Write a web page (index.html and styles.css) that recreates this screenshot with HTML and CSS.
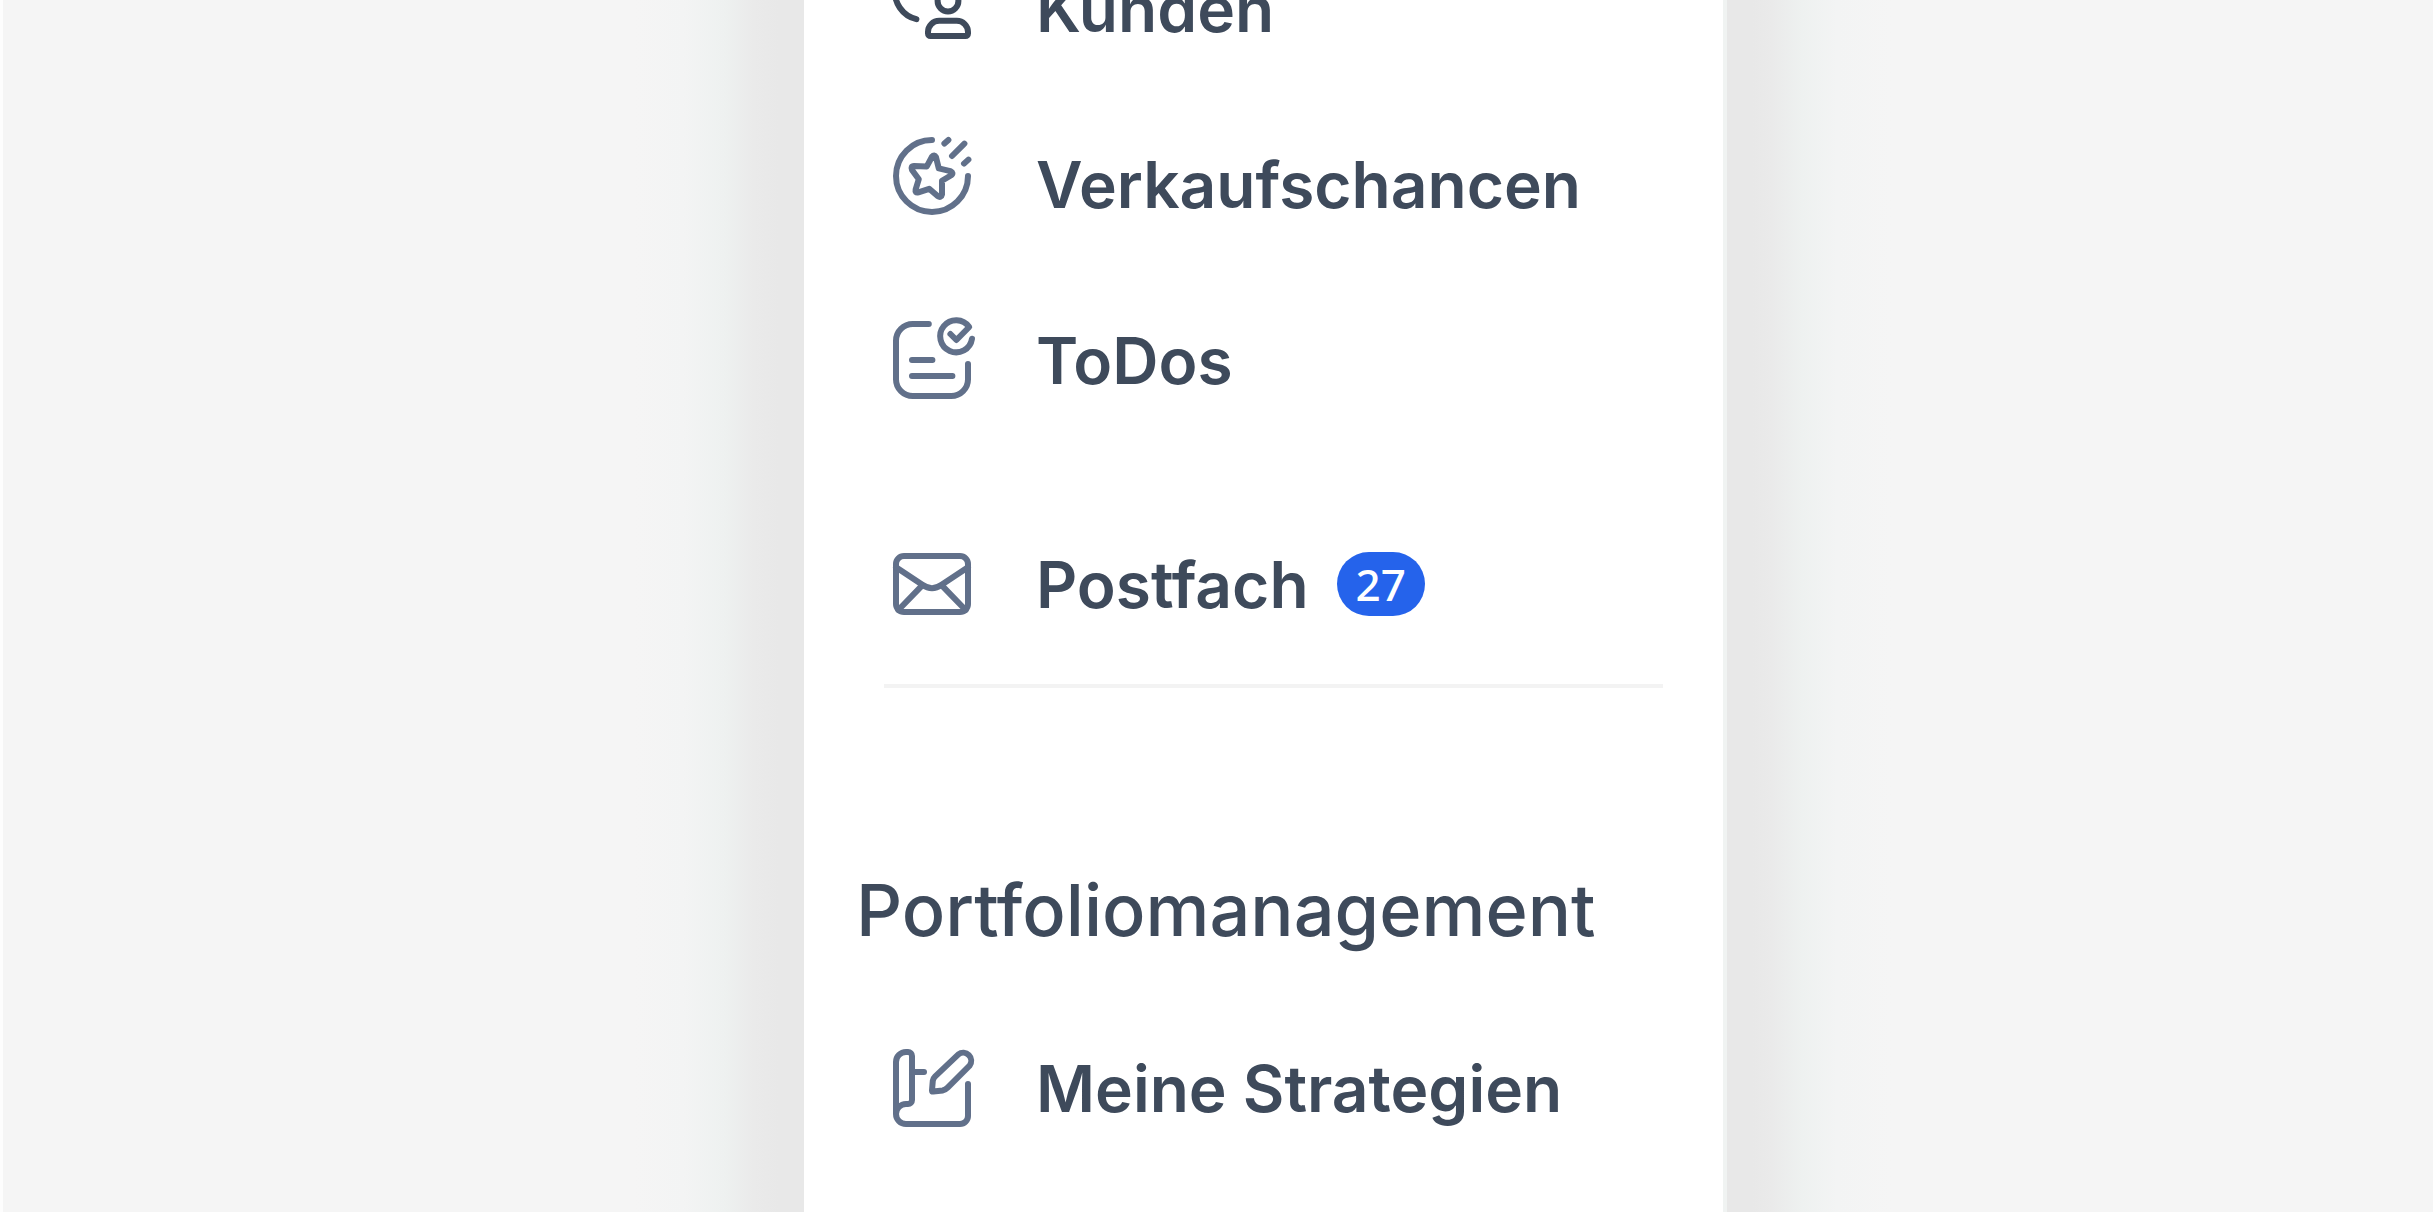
FILE: index.html
```html
<!DOCTYPE html>
<html lang="de">

<head>
    <meta charset="UTF-8">
    <meta name="viewport" content="width=device-width, initial-scale=1.0">
    <title>Navigation</title>

    <link rel="stylesheet" href="styles.css">
</head>

<body>

    <div class="page">
        <div class="side side-left"></div>

        <nav class="menu">
            <ul class="menu-list menu-main">
                <li>
                    <a href="#" class="menu-link active">
                        <svg class="icon" viewBox="0 0 24 24" aria-hidden="true">
                            <path d="M10 1a7 7 0 0 0-1.9 13.8" />
                            <circle cx="16" cy="10.25" r="2.6" />
                            <path d="M13.8 15.2h4.4a2.8 2.8 0 0 1 2.8 2.8v.4a.6.6 0 0 1-.6.6h-8.8a.6.6 0 0 1-.6-.6V18a2.8 2.8 0 0 1 2.8-2.8z" />
                        </svg>
                        <span>Kunden</span>
                    </a>
                </li>
                <li>
                    <a href="#" class="menu-link">
                        <svg class="icon" viewBox="0 0 24 24" aria-hidden="true">
                            <path d="M12 1a9 9 0 1 0 9 9" />
                            <path d="M15.1 1.9l1-.9M17 5l3.1-3.1M20 6.9l1.1-1" />
                            <path d="M10.7 7.6L12 5.2Q12.6 4.5 13 5.3L13.7 8.1L16.6 8.8Q17.5 9.3 16.8 9.8L14.5 11.2V14.6Q14.3 15.6 13.4 15L11.3 13.2L8.6 14.1Q7.7 14.3 7.9 13.4L8.7 10.8L7 8.5Q6.6 7.5 7.5 7.5Z" />
                        </svg>
                        <span>Verkaufschancen</span>
                    </a>
                </li>
                <li>
                    <a href="#" class="menu-link">
                        <svg class="icon" viewBox="0 0 24 24" aria-hidden="true">
                            <path d="M11.2 3H7.2A4.2 4.2 0 0 0 3 7.2v9.6A4.2 4.2 0 0 0 7.2 21h9.6a4.2 4.2 0 0 0 4.2-4.2V13" />
                            <path d="M7 12h5.1M7 16h10.1" />
                            <path d="M16.6 5.5L18.1 7l3.2-3.25A4 4 0 1 0 22 6.67" />
                        </svg>
                        <span>ToDos</span>
                    </a>
                </li>
                <li class="inbox">
                    <a href="#" class="menu-link">
                        <svg class="icon" viewBox="0 0 24 24" aria-hidden="true">
                            <rect x="3" y="5" width="18" height="14" rx="2" />
                            <path d="M3 7.8l6.6 4.4q2.4 1.7 4.8 0L21 7.8" />
                            <path d="M9.5 12.4l-5.9 6.1M14.5 12.4l5.9 6.1" />
                        </svg>
                        <span>Postfach</span>
                        <span class="badge">27</span>
                    </a>
                </li>
            </ul>

            <hr class="divider">

            <h2 class="menu-title">Portfoliomanagement</h2>
            <ul class="menu-list">
                <li>
                    <a href="#" class="menu-link">
                        <svg class="icon" viewBox="0 0 24 24" aria-hidden="true">
                            <path d="M3 18.5v-13A2.5 2.5 0 0 1 5.5 3H6a1 1 0 0 1 1 1v11a1 1 0 0 1-1 1h-.5A2.5 2.5 0 0 0 3 18.5 2.5 2.5 0 0 0 5.5 21H19a2 2 0 0 0 2-2v-8" />
                            <path d="M7 8h3" />
                            <path d="M18.6 3.6a2 2 0 0 1 2.8 2.8l-5.5 5.5q-.5.5-1.2.7l-2.4.3q-.3 0-.3-.3l.2-2.4q.1-.6.6-1.1z" />
                        </svg>
                        <span>Meine Strategien</span>
                    </a>
                </li>
            </ul>
        </nav>

        <div class="side side-right"></div>
    </div>

</body>

</html>
```
FILE: styles.css
```css
body {
    margin: 0;
    overflow: hidden;
    font-family: Inter, "Liberation Sans", sans-serif;
    color: #3e4a5b;
}

.page {
    display: flex;
    height: 100vh;
    background-color: #f5f5f5;
}

/* grey areas next to the menu, shaded towards it */
.side-left {
    flex: 801;
    border-left: 3px solid #fdfdfd;
    background: linear-gradient(to left, #e8e8e8 25px, #eaeaea 50px, #eef1f0 80px, #f3f4f4 120px, #f5f5f5 170px);
}

.side-right {
    flex: 706;
    background: linear-gradient(to right, #e8e8e8 25px, #eaeaea 45px, #eef1f0 75px, #f3f4f4 110px, #f5f5f5 165px);
}

.menu {
    box-sizing: border-box;
    flex: none;
    width: 923px;
    overflow: hidden;
    background-color: white;
    border-right: 4px solid #f0f3f2;
}

.menu-list {
    margin: 0;
    padding: 0;
    list-style: none;
}

/* the menu is scrolled down a little */
.menu-main {
    margin-top: -80px;
}

.menu-link {
    display: flex;
    align-items: center;
    height: 176px;
    padding-left: 80px;
    font-size: 64px;
    font-weight: 600;
    color: #3e4a5b;
    text-decoration: none;
}

.inbox {
    margin-top: 48px;
}

.icon {
    width: 96px;
    height: 96px;
    margin-right: 56px;
    fill: none;
    stroke: #61708a;
    stroke-width: 1.5;
    stroke-linecap: round;
    stroke-linejoin: round;
}

.active .icon {
    stroke: #3e4a5b;
}

.badge {
    margin-left: 28px;
    padding: 0 19px;
    border-radius: 32px;
    background-color: #2563eb;
    color: white;
    font-family: "Noto Sans", sans-serif;
    font-size: 44px;
    font-weight: 500;
    line-height: 64px;
}

.divider {
    height: 4px;
    margin: 12px 60px 0 80px;
    border: none;
    background-color: #f3f3f3;
}

.menu-title {
    margin: 174px 0 42px 52px;
    font-size: 72px;
    font-weight: 500;
    line-height: 96px;
}
```
